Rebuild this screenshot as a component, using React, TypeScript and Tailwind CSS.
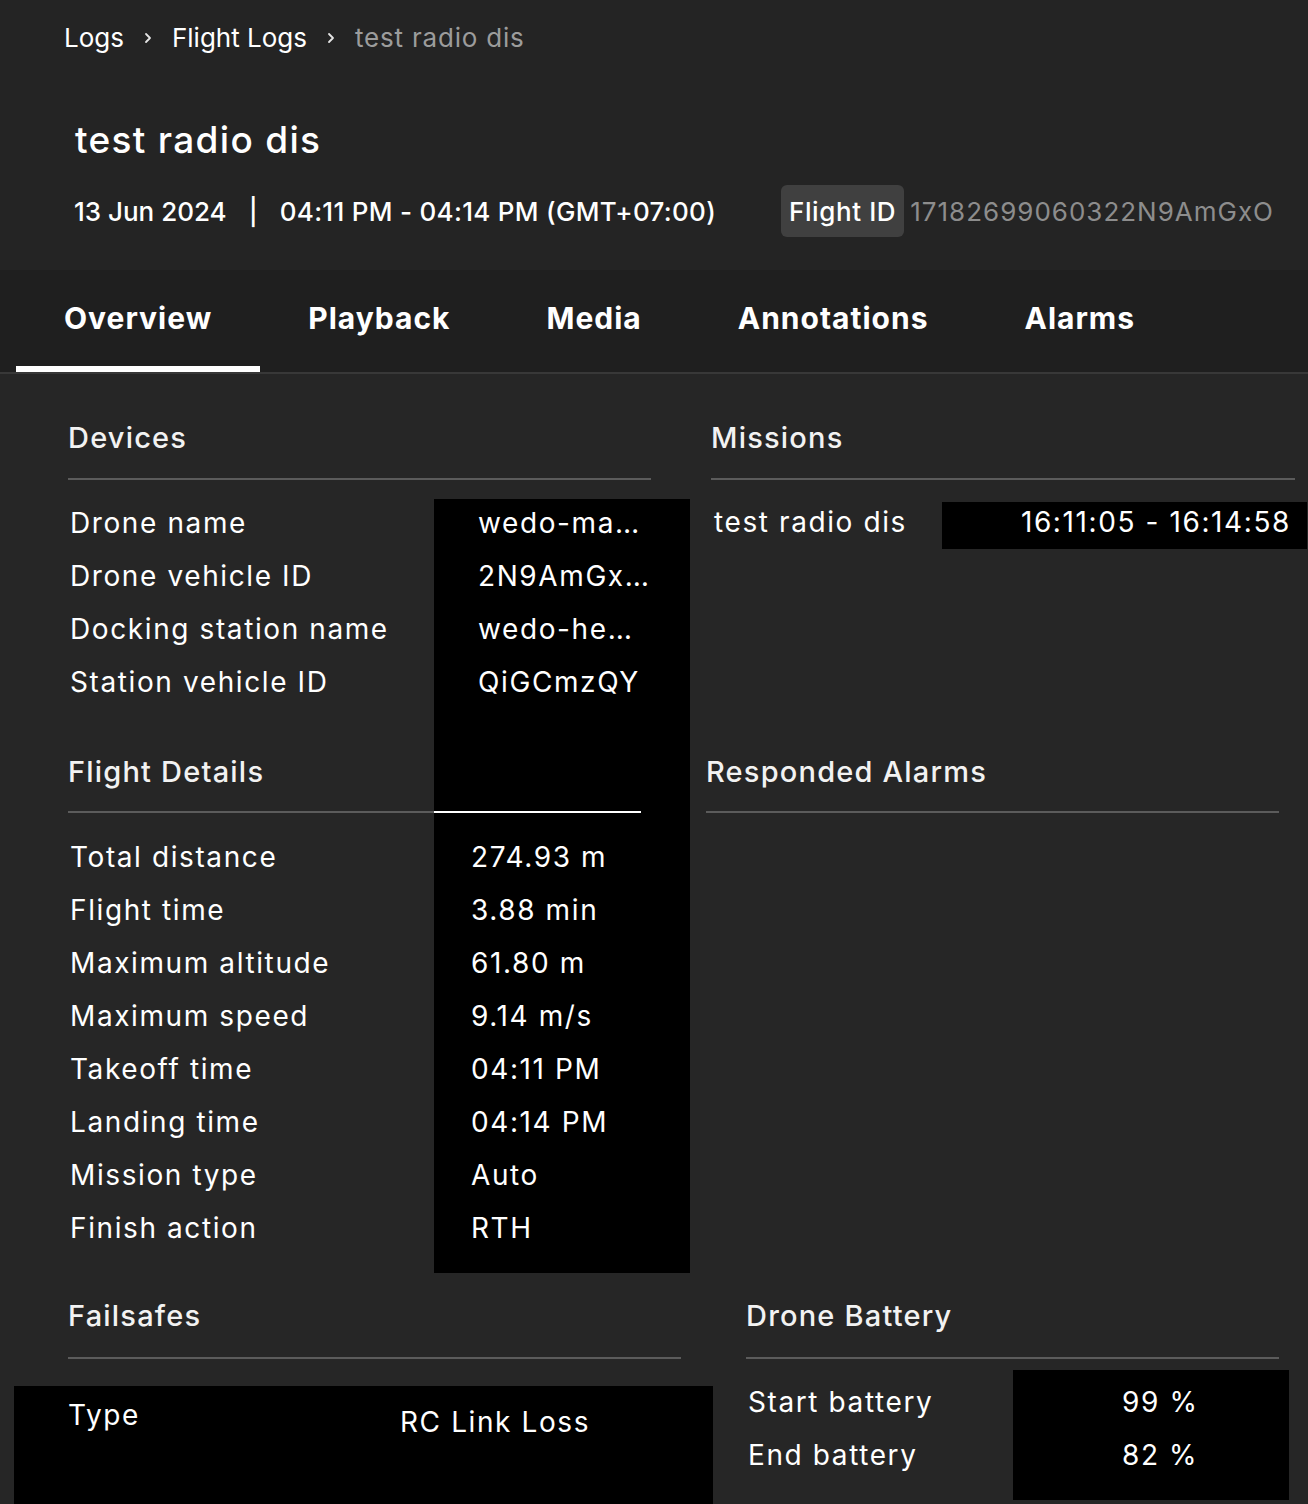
import React from 'react'

const devices = [
  ['Drone name', 'wedo-ma…'],
  ['Drone vehicle ID', '2N9AmGx…'],
  ['Docking station name', 'wedo-he…'],
  ['Station vehicle ID', 'QiGCmzQY'],
]

const details = [
  ['Total distance', '274.93 m'],
  ['Flight time', '3.88 min'],
  ['Maximum altitude', '61.80 m'],
  ['Maximum speed', '9.14 m/s'],
  ['Takeoff time', '04:11 PM'],
  ['Landing time', '04:14 PM'],
  ['Mission type', 'Auto'],
  ['Finish action', 'RTH'],
]

const battery = [
  ['Start battery', '99 %'],
  ['End battery', '82 %'],
]

const tabs = ['Overview', 'Playback', 'Media', 'Annotations', 'Alarms']

function Chevron() {
  return (
    <svg width="10" height="14" viewBox="0 0 10 14" className="mx-[19px]">
      <path d="M3 3l4 4-4 4" fill="none" stroke="#e5e5e5" strokeWidth="1.8" strokeLinecap="round" strokeLinejoin="round" />
    </svg>
  )
}

function Heading({ children }: { children: React.ReactNode }) {
  return <h2 className="text-[29px] font-medium leading-[36px] tracking-[1.2px] text-[#f2f2f2]">{children}</h2>
}

export default function App() {
  return (
    <div className="w-[1308px] h-[1504px] overflow-hidden bg-[#262626] text-white font-['Inter',sans-serif]">
      {/* header */}
      <div className="h-[270px] bg-[#242424] pt-[20px]">
        <nav className="flex items-center pl-16 h-[36px] text-[26px] leading-[36px]">
          <span>Logs</span>
          <Chevron />
          <span>Flight Logs</span>
          <Chevron />
          <span className="text-[#9c9c9c] tracking-[0.8px]">test radio dis</span>
        </nav>
        <h1 className="mt-[62px] ml-[75px] text-[37px] font-medium leading-[44px] tracking-[1.3px]">test radio dis</h1>
        <div className="mt-[23px] ml-[74px] mr-[34px] h-[52px] flex items-center justify-between text-[26px] font-medium">
          <span className="flex items-center">
            <span>13 Jun 2024</span>
            <span className="mx-[22px]">|</span>
            <span className="tracking-[0.3px]">04:11 PM - 04:14 PM (GMT+07:00)</span>
          </span>
          <div className="flex items-center">
            <span className="h-[52px] px-[8px] flex items-center rounded-[6px] bg-[#404040] tracking-[0.6px]">Flight ID</span>
            <span className="ml-[6px] text-[#8d8d8d] font-normal tracking-[1px]">17182699060322N9AmGxO</span>
          </div>
        </div>
      </div>

      {/* tabs */}
      <div className="h-[104px] bg-[#1f1f1f] border-b-2 border-[#383838] flex pl-4">
        {tabs.map((t, i) => (
          <div key={t} className="h-[102px] px-12 flex flex-col">
            <div className="flex-1 flex items-center text-[30px] font-bold tracking-[1px]">{t}</div>
            <div className={`h-[6px] -mx-12 ${i === 0 ? 'bg-white' : ''}`} />
          </div>
        ))}
      </div>

      {/* overview content */}
      <div className="flex">
        <div className="ml-[68px] w-[622px] pt-[46px]">
          <Heading>Devices</Heading>
          <div className="mt-[22px] h-[2px] w-[583px] bg-[#5b5b5b]" />
          <div className="mt-[19px] grid grid-cols-[366px_256px] text-[28px] tracking-[1.6px]">
            {devices.map(([k, v]) => (
              <React.Fragment key={k}>
                <div className="h-[53px] pb-[6px] pl-[2px] flex items-center whitespace-nowrap">{k}</div>
                <div className="h-[53px] pb-[6px] pl-[44px] flex items-center bg-black whitespace-nowrap">{v}</div>
              </React.Fragment>
            ))}
            <div className="h-[102px] pt-[43px]">
              <Heading>Flight Details</Heading>
              <div className="mt-[21px] h-[2px] w-[366px] bg-[#5b5b5b]" />
            </div>
            <div className="h-[102px] bg-black flex flex-col justify-end">
              <div className="h-[2px] w-[207px] bg-white" />
            </div>
            <div className="h-[20px]" />
            <div className="h-[20px] bg-black" />
            {details.map(([k, v]) => (
              <React.Fragment key={k}>
                <div className="h-[53px] pb-[6px] pl-[2px] flex items-center whitespace-nowrap">{k}</div>
                <div className="h-[53px] pb-[6px] pl-[37px] flex items-center bg-black whitespace-nowrap">{v}</div>
              </React.Fragment>
            ))}
            <div className="h-[16px]" />
            <div className="h-[16px] bg-black" />
          </div>
        </div>

        <div className="ml-[16px] w-[602px] pt-[46px]">
          <div className="pl-[5px]">
            <Heading>Missions</Heading>
            <div className="mt-[22px] h-[2px] w-[584px] bg-[#5b5b5b]" />
            <div className="mt-[22px] h-[47px] flex items-center text-[28px] tracking-[1.6px]">
              <span className="w-[231px] pl-[3px] pb-[8px] whitespace-nowrap">test radio dis</span>
              <div className="h-full w-[365px] bg-black flex items-center justify-end pr-[16px] pb-[8px] whitespace-nowrap">
                16:11:05 - 16:14:58
              </div>
            </div>
          </div>
          <div className="mt-[205px]">
            <Heading>Responded Alarms</Heading>
            <div className="mt-[21px] h-[2px] w-[573px] bg-[#5b5b5b]" />
          </div>
        </div>
      </div>

      <div className="flex">
        <div className="ml-[14px] w-[699px] pt-[25px]">
          <div className="pl-[54px]">
            <Heading>Failsafes</Heading>
            <div className="mt-[23px] h-[2px] w-[613px] bg-[#5b5b5b]" />
          </div>
          <div className="mt-[27px] h-[130px] bg-black flex text-[28px] leading-[32px] tracking-[1.6px]">
            <span className="w-[386px] pl-[54px] pt-[13px]">Type</span>
            <span className="pt-[20px]">RC Link Loss</span>
          </div>
        </div>
        <div className="ml-[33px] w-[543px] pt-[25px]">
          <Heading>Drone Battery</Heading>
          <div className="mt-[23px] h-[2px] w-[533px] bg-[#5b5b5b]" />
          <div className="mt-[11px] flex text-[28px] tracking-[1.6px]">
            <div className="w-[267px] pt-[5px] pl-[2px]">
              {battery.map(([k]) => (
                <div key={k} className="h-[53px] flex items-center">{k}</div>
              ))}
            </div>
            <div className="w-[276px] bg-black pt-[5px] pb-[19px] pl-[109px]">
              {battery.map(([k, v]) => (
                <div key={k} className="h-[53px] flex items-center">{v}</div>
              ))}
            </div>
          </div>
        </div>
      </div>
    </div>
  )
}
